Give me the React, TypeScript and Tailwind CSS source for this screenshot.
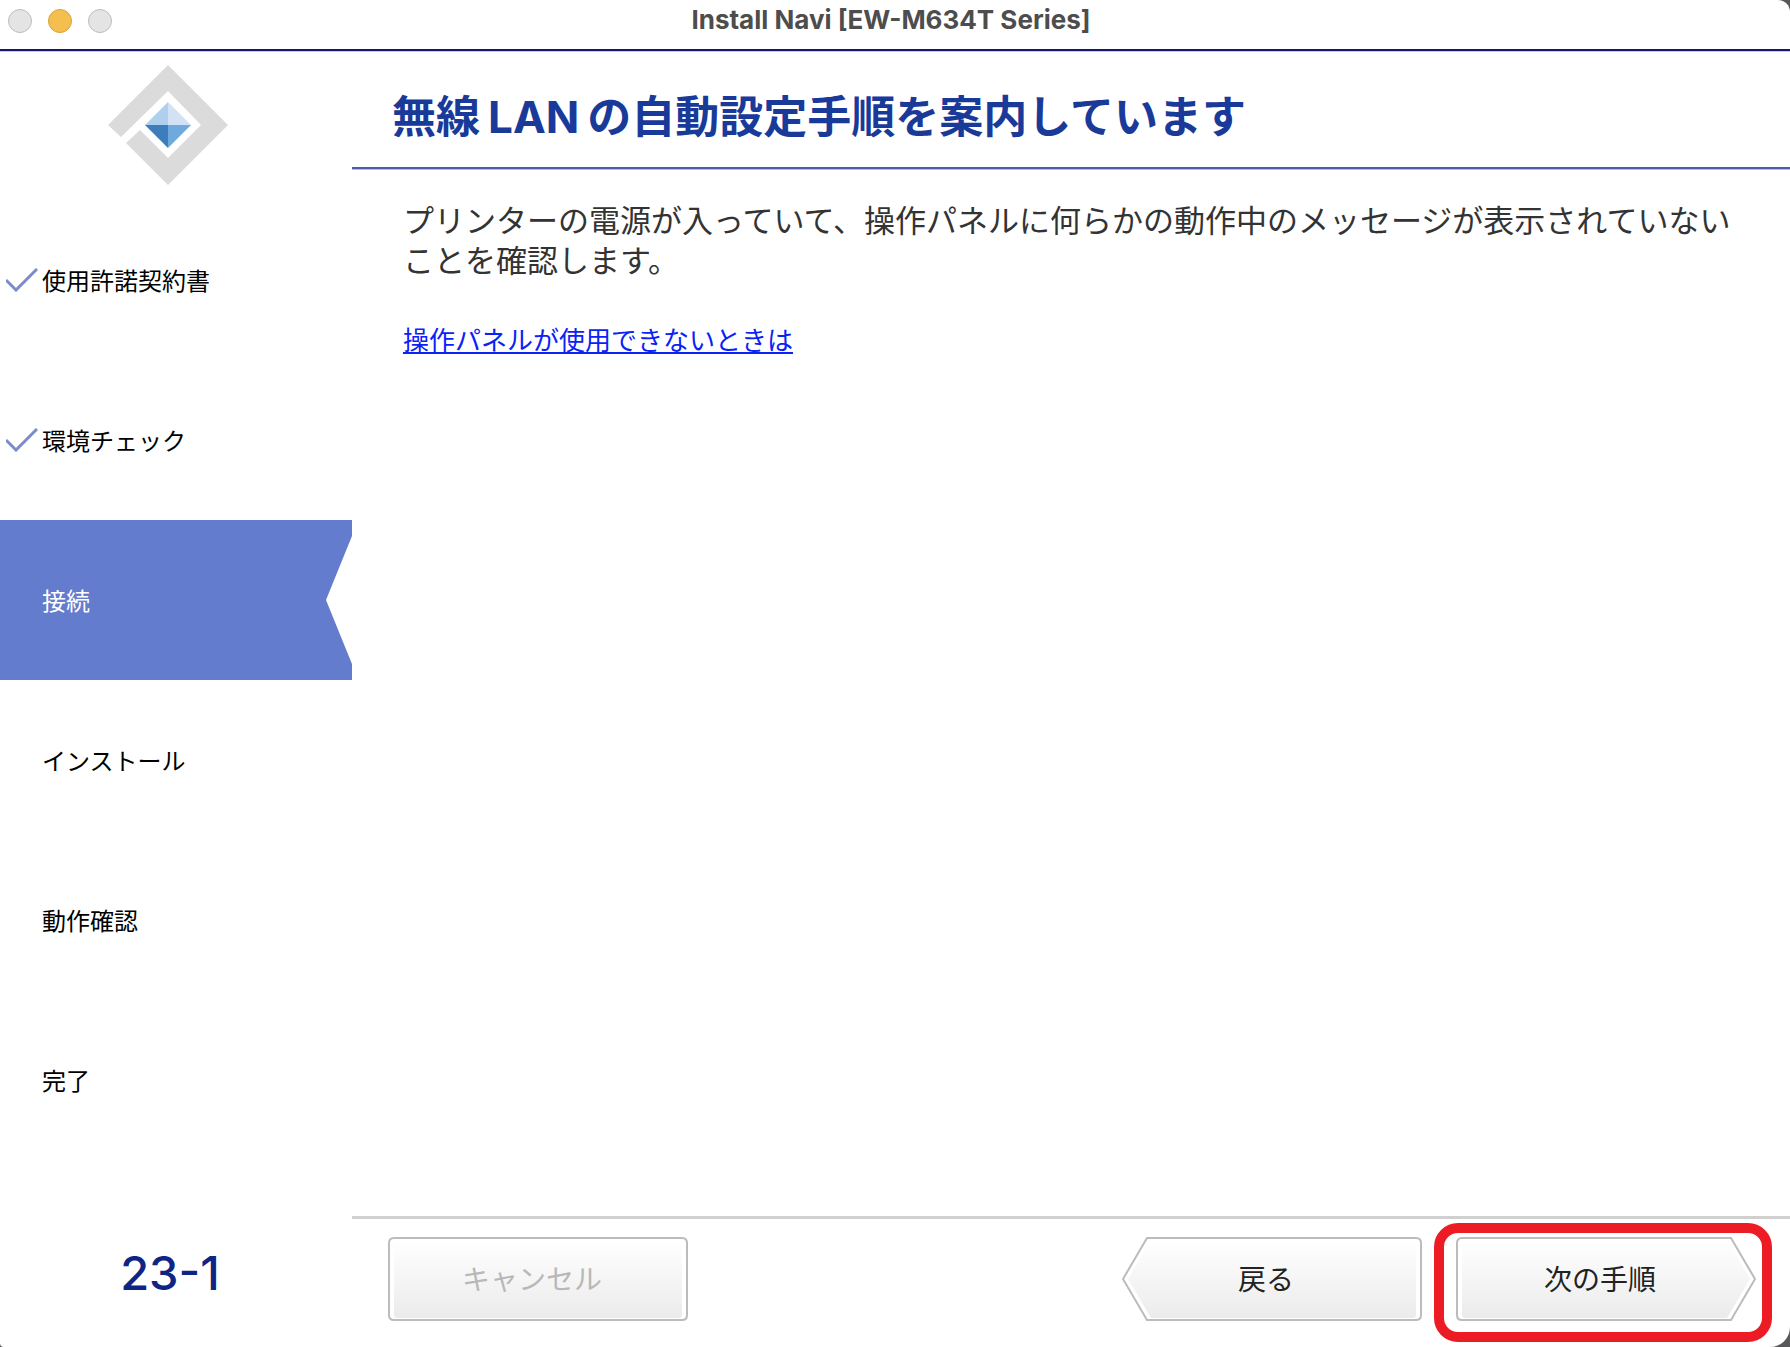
import { useState } from "react";

// list: インストールの手順 //
const steps = ["使用許諾契約書", "環境チェック", "接続", "インストール", "動作確認", "完了"];

// component: 製品ロゴ //
const Logo = () => (
    <svg viewBox="0 0 120 120" className="size-[120px]" aria-hidden="true">
        <path d="M60 0 120 60 60 120 18 78 32 65 60 93 93 60 60 26 13 72 0 60Z" fill="#dbdbdb" />
        <path d="M60 37V60H37Z" fill="#aecfed" />
        <path d="M60 37V60H83Z" fill="#d2e2f3" />
        <path d="M37 60H60V83Z" fill="#3d7dbc" />
        <path d="M83 60H60V83Z" fill="#6eaade" />
    </svg>
);

// component: 完了した手順のチェックマーク //
const CheckMark = () => (
    <svg viewBox="0 0 32 24" className="h-6 w-8" fill="none" aria-hidden="true">
        <path d="M0 12 10 22 31 1" stroke="#7b8bcb" strokeWidth="3" />
    </svg>
);

// component: 下部のボタン（shape で矢印の向きを指定） //
const outlines = {
    plain: {
        outer: "M6 1H294Q299 1 299 6V78Q299 83 294 83H6Q1 83 1 78V6Q1 1 6 1Z",
        inner: "M9 4H291Q294 4 294 7V78Q294 81 291 81H9Q6 81 6 78V7Q6 4 9 4Z",
    },
    left: {
        outer: "M25 1H294Q299 1 299 6V78Q299 83 294 83H25L1 42Z",
        inner: "M28 4H291Q294 4 294 7V78Q294 81 291 81H29L6 42Z",
    },
    right: {
        outer: "M275 1H6Q1 1 1 6V78Q1 83 6 83H275L299 42Z",
        inner: "M272 4H9Q6 4 6 7V78Q6 81 9 81H271L294 42Z",
    },
};

type NavButtonProps = {
    label: string;
    shape: keyof typeof outlines;
    disabled?: boolean;
    onClick?: () => void;
};

const NavButton = ({ label, shape, disabled, onClick }: NavButtonProps) => (
    <button
        type="button"
        disabled={disabled}
        onClick={onClick}
        className="relative flex h-[84px] w-[300px] shrink-0 items-center justify-center pt-0.5 pr-3 text-[28px] leading-10 text-[#222] disabled:text-[#b8b8b8]"
    >
        <svg viewBox="0 0 300 84" className="absolute inset-0 size-full" aria-hidden="true">
            <defs>
                <linearGradient id={`fill-${shape}`} x1="0" y1="0" x2="0" y2="1">
                    <stop offset="0" stopColor="#ffffff" />
                    <stop offset="1" stopColor="#ebebeb" />
                </linearGradient>
            </defs>
            <path d={outlines[shape].outer} fill="#fff" stroke="#bcbcbc" strokeWidth="2" />
            <path d={outlines[shape].inner} fill={`url(#fill-${shape})`} />
        </svg>
        <span className="relative">{label}</span>
    </button>
);

const App = () => {
    // state: 現在の手順 //
    const [current, setCurrent] = useState(2);

    return (
        <div className="min-h-screen bg-[#58585a] font-['Inter','Noto_Sans_CJK_JP',sans-serif]">
            <div className="flex min-h-screen flex-col rounded-tr-xl rounded-br-[20px] rounded-bl bg-white">

                {/* タイトルバー */}
                <header className="grid h-[51px] grid-cols-[1fr_auto_1fr] items-center border-b-2 border-[#14186f] pr-4 pb-2 pl-2 shadow-[0_1px_0_#c3c9ea]">
                    <div className="flex gap-4">
                        <button type="button" aria-label="閉じる" className="size-6 rounded-full border border-[#bdbdbd] bg-[#e4e4e4]" />
                        <button type="button" aria-label="しまう" className="size-6 rounded-full border border-[#dba03a] bg-[#f5bf4f]" />
                        <button type="button" aria-label="拡大" className="size-6 rounded-full border border-[#bdbdbd] bg-[#e4e4e4]" />
                    </div>
                    <div className="pb-0.5 text-[26px] leading-8 font-bold text-[#4d4d4d]">Install Navi [EW-M634T Series]</div>
                </header>

                <div className="flex flex-1">
                    {/* 手順リスト (左) */}
                    <aside className="flex w-[352px] shrink-0 flex-col">
                        <div className="flex h-[149px] justify-center pt-3.5 pr-4">
                            <Logo />
                        </div>
                        <ol>
                            {steps.map((step, index) => (
                                <li
                                    key={step}
                                    aria-current={index === current ? "step" : undefined}
                                    className={`flex h-40 items-center text-2xl ${index === current
                                        ? "bg-[#647ccd] text-white [clip-path:polygon(0_0,100%_0,100%_10%,326px_50%,100%_90%,100%_100%,0_100%)]"
                                        : "text-black"
                                        }`}
                                >
                                    <span className="flex w-[42px] justify-end pr-1">{index < current && <CheckMark />}</span>
                                    <span className="pt-1">{step}</span>
                                </li>
                            ))}
                        </ol>
                        <div className="mt-auto flex h-[131px] items-center justify-center pr-3 pb-4 text-[47px] font-medium text-[#0f2585]">23-1</div>
                    </aside>

                    {/* 案内 (右) */}
                    <main className="flex flex-1 flex-col">
                        <h1 className="flex h-[118px] items-center border-b-2 border-[#4d59ad] px-10 pt-4 text-[44px] font-bold text-[#1a3a9a] shadow-[0_1px_0_#b9bee0]">
                            無線<span className="mx-2">LAN</span>の自動設定手順を案内しています
                        </h1>
                        <div className="flex-1 py-8 pr-12 pl-[51px]">
                            <p className="text-[31px] leading-10 text-[#333]">
                                プリンターの電源が入っていて、操作パネルに何らかの動作中のメッセージが表示されていないことを確認します。
                            </p>
                            <a href="#panel-help" className="mt-10 inline-block text-[26px] leading-10 text-[#0a22f5] underline">
                                操作パネルが使用できないときは
                            </a>
                        </div>
                        <footer className="flex h-[131px] items-start border-t-3 border-[#d0d0d0] pr-[18px] pl-9">
                            <div className="pt-[18px]">
                                <NavButton label="キャンセル" shape="plain" disabled />
                            </div>
                            <div className="ml-auto pt-[18px]">
                                <NavButton label="戻る" shape="left" onClick={() => setCurrent(Math.max(current - 1, 0))} />
                            </div>
                            <div className="mt-1 ml-3 flex h-[119px] w-[338px] items-start justify-end rounded-3xl border-10 border-[#ed1c24] pt-1 pr-1.5">
                                <NavButton label="次の手順" shape="right" onClick={() => setCurrent(Math.min(current + 1, steps.length - 1))} />
                            </div>
                        </footer>
                    </main>
                </div>
            </div>
        </div>
    );
};

export default App;
